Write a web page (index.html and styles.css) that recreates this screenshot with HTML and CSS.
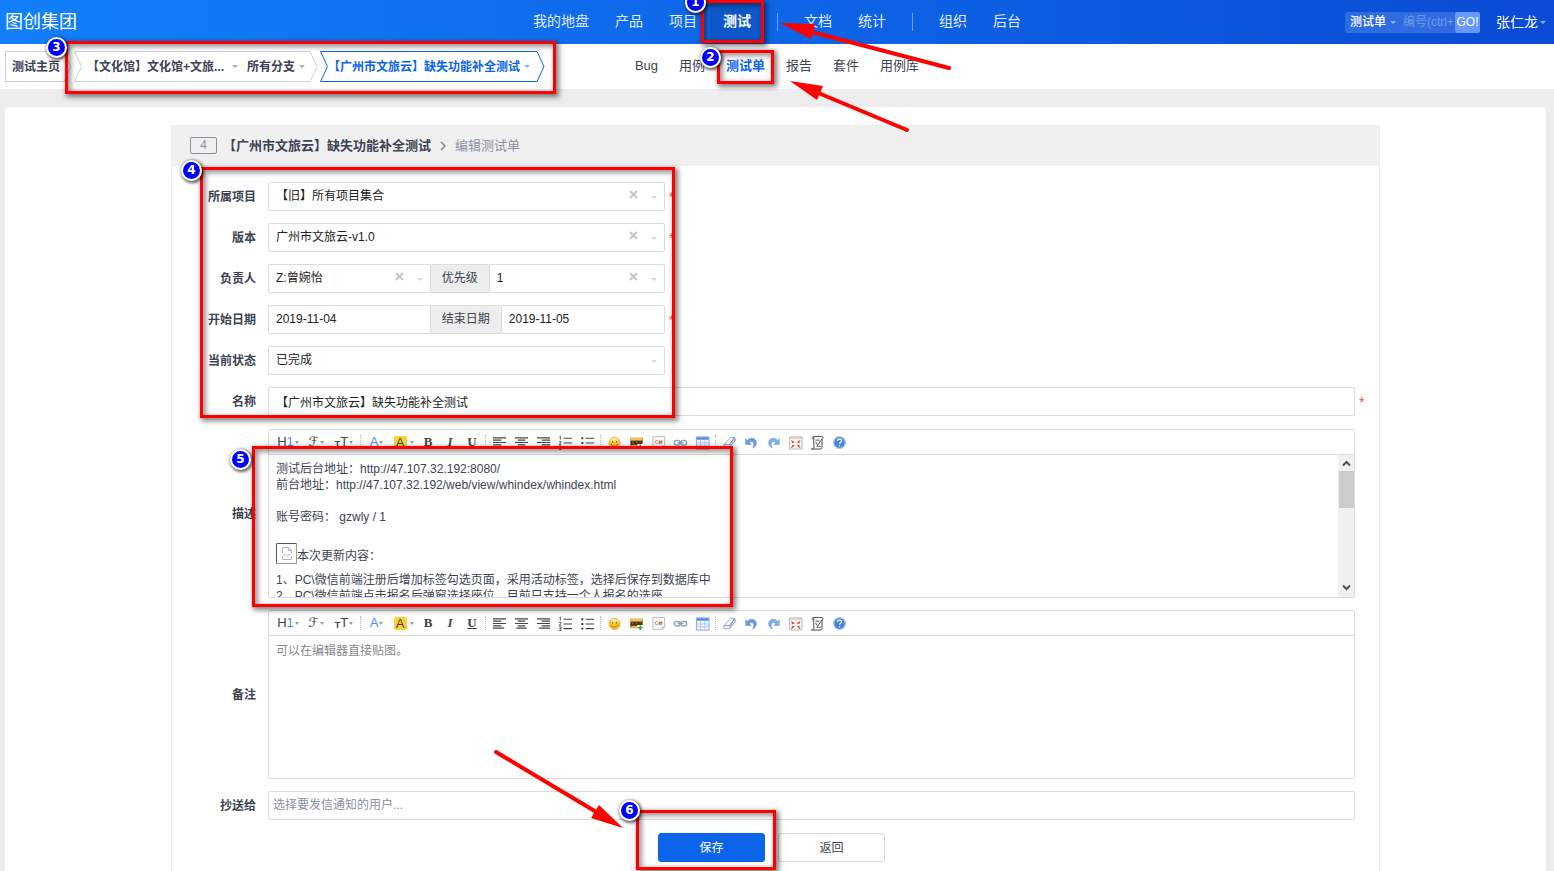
FILE: index.html
```html
<!DOCTYPE html>
<html lang="zh-CN">
<head>
<meta charset="utf-8">
<title>编辑测试单</title>
<link rel="stylesheet" href="styles.css">
</head>
<body>
<svg class="defs" aria-hidden="true">
  <defs>
    <symbol id="i-left" viewBox="0 0 16 16"><path d="M1 3h14M1 5.500h9M1 8h14M1 10.500h9M1 13h12" stroke="#444" stroke-width="1.300" fill="none"/></symbol>
    <symbol id="i-center" viewBox="0 0 16 16"><path d="M1 3h14M4 5.500h8M1 8h14M4 10.500h8M2.500 13h11" stroke="#444" stroke-width="1.300" fill="none"/></symbol>
    <symbol id="i-right" viewBox="0 0 16 16"><path d="M1 3h14M6 5.500h9M1 8h14M6 10.500h9M3 13h12" stroke="#444" stroke-width="1.300" fill="none"/></symbol>
    <symbol id="i-ol" viewBox="0 0 16 16"><path d="M6 3.500h9M6 8.500h9M6 13.500h9" stroke="#444" stroke-width="1.200"/><path d="M1.500 2l1-.8v3.600M1.200 6.800h2v1.400l-2 1.600h2.200M1.200 11.500h2v4h-2M1.500 13.400h1.500" stroke="#444" stroke-width=".9" fill="none"/></symbol>
    <symbol id="i-ul" viewBox="0 0 16 16"><path d="M6 3.500h9M6 8.500h9M6 13.500h9" stroke="#444" stroke-width="1.200"/><path d="M1.500 2.500h2v2h-2zM1.500 7.500h2v2h-2zM1.500 12.500h2v2h-2z" fill="#333"/></symbol>
    <symbol id="i-smile" viewBox="0 0 16 16"><circle cx="8" cy="8.500" r="6" fill="#fbc62d" stroke="#e9a51c" stroke-width=".7"/><ellipse cx="8" cy="5.500" rx="4" ry="2.200" fill="#fff3a8" opacity=".8"/><path d="M6 6v2M10 6v2" stroke="#8a5a00" stroke-width="1.200"/><path d="M4.300 9.500c1.500 3.300 5.900 3.300 7.400 0" stroke="#a86400" stroke-width="1" fill="none"/></symbol>
    <symbol id="i-image" viewBox="0 0 16 16"><path d="M1.500 3h13v9.500h-13z" fill="#3c2a12"/><path d="M1.500 3h13v3h-13z" fill="#f1c44e"/><path d="M2 11l3-1 3 .5 3-.5v3H2z" fill="#e2b04a"/><path d="M3 7h2v2H3zM7 7h2v1.500H7zM11 7h2v1h-2z" fill="#b8532d"/><path d="M9 9.500h6v6H9z" fill="#fff"/><path d="M12 10v5M9.500 12.500h5" stroke="#36a33a" stroke-width="1.700"/></symbol>
    <symbol id="i-code" viewBox="0 0 16 16"><path d="M2 1.500h12.500v10L12 14.500H2z" fill="#f8f8f8" stroke="#aaa" stroke-width=".8"/><path d="M14.500 11.500H12v3" fill="#ddd" stroke="#aaa" stroke-width=".6"/><path d="M7 6.200c-3-1.200-3.500 3.800 0 2.800M9.300 5.800l-.5 3.700M11.300 5.800l-.5 3.700M8 7h4.200M7.800 8.400h4.200" stroke="#b9704c" stroke-width="1" fill="none"/></symbol>
    <symbol id="i-link" viewBox="0 0 16 16"><rect x="1.500" y="5.800" width="6" height="4.800" rx="2.200" fill="none" stroke="#8ea5c8" stroke-width="1.500"/><rect x="8.500" y="5.800" width="6" height="4.800" rx="2.200" fill="none" stroke="#8ea5c8" stroke-width="1.500"/><path d="M5 8.200h6" stroke="#7d95bd" stroke-width="1.300"/></symbol>
    <symbol id="i-table" viewBox="0 0 16 16"><path d="M1.500 2h13.500v13H1.500z" fill="#f3f8ff" stroke="#7fa3de"/><path d="M2 2.500h12.500V5H2z" fill="#4f86dc"/><path d="M1.500 8.500H15M1.500 11.500H15M6 5v10M10.500 5v10" stroke="#a9c4ee" stroke-width=".9"/></symbol>
    <symbol id="i-eraser" viewBox="0 0 16 16"><path d="M9.500 2.500h4L8 10.500H2z" fill="#fff" stroke="#8fa3c4" stroke-width="1"/><path d="M2 10.500v3h6l6.500-8-1-3L8 10.500z" fill="#b9cdea" stroke="#7188b0" stroke-width=".8"/><path d="M2.500 11h5.200v2H2.500z" fill="#fff"/></symbol>
    <symbol id="i-undo" viewBox="0 0 16 16"><path d="M3.500 6C7 1.500 13.500 3.500 13.200 8.500c-.2 2.800-2.200 4.500-4 5.500 1.700-2.700 2-6.300-.8-7-1.200-.2-2 .4-2.600 1.300L7.500 10H1.800V4z" fill="#6c9ae2" stroke="#4f7fcc" stroke-width=".5"/></symbol>
    <symbol id="i-redo" viewBox="0 0 16 16"><path d="M12.500 6C9 1.500 2.500 3.500 2.800 8.500c.2 2.800 2.200 4.500 4 5.500C5.100 11.300 4.800 7.700 7.600 7c1.200-.2 2 .4 2.600 1.300L8.500 10h5.700V4z" fill="#7fb0e8" stroke="#5a8fd2" stroke-width=".5"/></symbol>
    <symbol id="i-full" viewBox="0 0 16 16"><path d="M1.500 2h13.500v13H1.500z" fill="#f7f5f3" stroke="#aaa" stroke-width=".8"/><path d="M2 3.300h12.500" stroke="#bbb"/><path d="M3.500 6l2.500 1.500-1.800.5M13 6l-2.500 1.500 1.800.5M3.500 13.500L6 11.500l-1.800-.7M13 13.500l-2.500-2 1.800-.7" stroke="#d0342c" stroke-width="1.100" fill="none"/></symbol>
    <symbol id="i-source" viewBox="0 0 16 16"><path d="M4 1.500h8.500c2 0 1.800 2.500.3 2.500v9.500c-.3 1-1 1.500-2 1.500H1.500C4 14.500 5 13.500 4 11z" fill="#f6f6f6" stroke="#444" stroke-width="1"/><path d="M4 1.500c-2.500.5-2 3-.2 3M12.800 4l-5 7.500M6 5.500h4M6 7.500l2 3M7 12h4.500" stroke="#555" stroke-width="1" fill="none"/></symbol>
    <symbol id="i-help" viewBox="0 0 16 16"><circle cx="8" cy="8" r="6.200" fill="#4a84d9" stroke="#9fbff0" stroke-width="1.400"/><path d="M5.800 6.300c.2-2.500 4.500-2.500 4.400 0 0 1.300-2.200 1.500-2.200 3M8 10.800v1.200" stroke="#fff" stroke-width="1.300" fill="none"/></symbol>
    <symbol id="i-x" viewBox="0 0 9 9"><path d="M1 1l7 7M8 1L1 8" stroke="#c8c8c8" stroke-width="2"/></symbol>
  </defs>
</svg>

<header class="topbar">
  <a class="brand" href="#">图创集团</a>
  <nav class="mainnav" aria-label="主导航">
    <a href="#">我的地盘</a><a href="#">产品</a><a href="#">项目</a><a href="#" class="active">测试</a>
    <span class="divider"></span>
    <a href="#">文档</a><a href="#">统计</a>
    <span class="divider"></span>
    <a href="#">组织</a><a href="#">后台</a>
  </nav>
  <div class="tools">
    <form class="search">
      <button type="button" class="scope">测试单<span class="caret"></span></button>
      <input type="text" aria-label="编号" placeholder="编号(ctrl+g)">
      <button type="button" class="go">GO!</button>
    </form>
    <button type="button" class="user">张仁龙<span class="caret"></span></button>
  </div>
</header>

<div class="subbar">
  <div class="crumbs">
    <div class="crumb first"><a href="#">测试主页</a><svg width="8" height="31"><path d="M0 .5L7 15.500L0 30.500"/></svg></div>
    <div class="crumb">
      <svg width="8" height="31"><path d="M8 .5H.5L7.500 15.500L.5 30.500H8"/></svg>
      <button type="button" class="product">【文化馆】文化馆+文旅...<span class="caret"></span></button>
      <button type="button" class="branch">所有分支<span class="caret"></span></button>
      <svg width="8" height="31"><path d="M0 .5L7 15.500L0 30.500"/></svg>
    </div>
    <div class="crumb current">
      <svg width="8" height="31"><path d="M8 .5H.5L7.500 15.500L.5 30.500H8"/></svg>
      <button type="button" class="task">【广州市文旅云】缺失功能补全测试<span class="caret"></span></button>
      <svg width="8" height="31"><path d="M0 .5L7 15.500L0 30.500"/></svg>
    </div>
  </div>
  <nav class="subnav" aria-label="测试">
    <a href="#">Bug</a><a href="#">用例</a><a href="#" class="active">测试单</a><a href="#">报告</a><a href="#">套件</a><a href="#">用例库</a>
  </nav>
  <div class="spacer"></div>
</div>

<main class="content">
  <section class="panel">
    <header class="panel-head">
      <span class="idbox">4</span>
      <h1>【广州市文旅云】缺失功能补全测试</h1>
      <svg class="arrow" width="6" height="10" viewBox="0 0 6 10"><path d="M1 1l4 4-4 4" fill="none" stroke="#7b8090" stroke-width="1.500"/></svg>
      <span class="action">编辑测试单</span>
    </header>
    <form class="form">
      <div class="row">
        <label for="project">所属项目</label>
        <div class="field">
          <div class="short"><div class="pick"><select id="project"><option>【旧】所有项目集合</option></select><button type="button" class="clear" aria-label="清除"><svg width="9" height="9"><use href="#i-x"/></svg></button><span class="caret"></span></div></div>
          <span class="req">*</span>
        </div>
      </div>
      <div class="row">
        <label for="build">版本</label>
        <div class="field">
          <div class="short"><div class="pick"><select id="build"><option>广州市文旅云-v1.0</option></select><button type="button" class="clear" aria-label="清除"><svg width="9" height="9"><use href="#i-x"/></svg></button><span class="caret"></span></div></div>
          <span class="req">*</span>
        </div>
      </div>
      <div class="row">
        <label for="owner">负责人</label>
        <div class="field">
          <div class="short">
            <div class="pick lead"><select id="owner"><option>Z:曾婉怡</option></select><button type="button" class="clear" aria-label="清除"><svg width="9" height="9"><use href="#i-x"/></svg></button><span class="caret"></span></div>
            <label class="addon" for="pri">优先级</label>
            <div class="pick"><select id="pri"><option>1</option></select><button type="button" class="clear" aria-label="清除"><svg width="9" height="9"><use href="#i-x"/></svg></button><span class="caret"></span></div>
          </div>
        </div>
      </div>
      <div class="row">
        <label for="begin">开始日期</label>
        <div class="field">
          <div class="short">
            <input class="text lead" id="begin" type="text" value="2019-11-04">
            <label class="addon" for="end">结束日期</label>
            <input class="text" id="end" type="text" value="2019-11-05">
          </div>
          <span class="req">*</span>
        </div>
      </div>
      <div class="row">
        <label for="status">当前状态</label>
        <div class="field"><div class="short"><div class="pick"><select id="status"><option>已完成</option></select><span class="caret"></span></div></div></div>
      </div>
      <div class="row named">
        <label for="name">名称</label>
        <div class="field"><input class="text" id="name" type="text" value="【广州市文旅云】缺失功能补全测试"><span class="req">*</span></div>
      </div>

      <div class="row">
        <span class="label" id="desc-label">描述</span>
        <div class="editor">
          <div class="toolbar">
            <button type="button" class="dd">H<i class="blue">1</i><span class="caret"></span></button><button type="button" class="dd"><i class="script">ℱ</i><span class="caret"></span></button><button type="button" class="dd"><small>T</small>T<span class="caret"></span></button>
            <span class="sep"></span>
            <button type="button" class="dd color fore">A<span class="caret"></span></button><button type="button" class="dd color"><i class="mark">A</i><span class="caret"></span></button><button type="button" class="bold">B</button><button type="button" class="italic">I</button><button type="button" class="under">U</button>
            <span class="sep"></span>
            <button type="button" aria-label="左对齐"><svg><use href="#i-left"/></svg></button><button type="button" aria-label="居中"><svg><use href="#i-center"/></svg></button><button type="button" aria-label="右对齐"><svg><use href="#i-right"/></svg></button><button type="button" aria-label="编号"><svg><use href="#i-ol"/></svg></button><button type="button" aria-label="项目符号"><svg><use href="#i-ul"/></svg></button>
            <span class="sep"></span>
            <button type="button" aria-label="表情"><svg><use href="#i-smile"/></svg></button><button type="button" aria-label="图片"><svg><use href="#i-image"/></svg></button><button type="button" aria-label="代码"><svg><use href="#i-code"/></svg></button><button type="button" aria-label="链接"><svg><use href="#i-link"/></svg></button><button type="button" aria-label="表格"><svg><use href="#i-table"/></svg></button>
            <span class="sep"></span>
            <button type="button" aria-label="清除格式"><svg><use href="#i-eraser"/></svg></button><button type="button" aria-label="撤销"><svg><use href="#i-undo"/></svg></button><button type="button" aria-label="重做"><svg><use href="#i-redo"/></svg></button><button type="button" aria-label="全屏"><svg><use href="#i-full"/></svg></button><button type="button" aria-label="源代码"><svg><use href="#i-source"/></svg></button><button type="button" aria-label="帮助"><svg><use href="#i-help"/></svg></button>
          </div>
          <div class="editbody">
            <div class="rich" contenteditable="true" role="textbox" aria-labelledby="desc-label">
              <p>测试后台地址：http://47.107.32.192:8080/<br>前台地址：http://47.107.32.192/web/view/whindex/whindex.html<br><br>账号密码： gzwly / 1</p>
              <p class="imgline"><svg width="21" height="21" viewBox="0 0 21 21"><path d="M.5 20.500V.5h20" fill="none" stroke="#555"/><path d="M20.500.5v20H.5" fill="none" stroke="#999"/><path d="M6.500 10V4.500h6l3 3V10M12.500 4.500v3h3M6.500 16.500v-3l3-2.500 2 2 2-1.500 2 2v3z" fill="none" stroke="#b5b5b5"/></svg>本次更新内容：</p>
              <p class="list">1、PC\微信前端注册后增加标签勾选页面，采用活动标签，选择后保存到数据库中<br>2、PC\微信前端点击报名后弹窗选择座位，目前只支持一个人报名的选座</p>
            </div>
            <div class="scroll" aria-hidden="true">
              <svg width="9" height="7" viewBox="0 0 9 7"><path d="M1 5.500l3.500-3.500L8 5.500" fill="none" stroke="#505050" stroke-width="2"/></svg>
              <span class="thumb"></span>
              <svg width="9" height="7" viewBox="0 0 9 7"><path d="M1 1.500L4.500 5 8 1.500" fill="none" stroke="#505050" stroke-width="2"/></svg>
            </div>
          </div>
        </div>
      </div>

      <div class="row">
        <label for="memo">备注</label>
        <div class="editor">
          <div class="toolbar">
            <button type="button" class="dd">H<i class="blue">1</i><span class="caret"></span></button><button type="button" class="dd"><i class="script">ℱ</i><span class="caret"></span></button><button type="button" class="dd"><small>T</small>T<span class="caret"></span></button>
            <span class="sep"></span>
            <button type="button" class="dd color fore">A<span class="caret"></span></button><button type="button" class="dd color"><i class="mark">A</i><span class="caret"></span></button><button type="button" class="bold">B</button><button type="button" class="italic">I</button><button type="button" class="under">U</button>
            <span class="sep"></span>
            <button type="button" aria-label="左对齐"><svg><use href="#i-left"/></svg></button><button type="button" aria-label="居中"><svg><use href="#i-center"/></svg></button><button type="button" aria-label="右对齐"><svg><use href="#i-right"/></svg></button><button type="button" aria-label="编号"><svg><use href="#i-ol"/></svg></button><button type="button" aria-label="项目符号"><svg><use href="#i-ul"/></svg></button>
            <span class="sep"></span>
            <button type="button" aria-label="表情"><svg><use href="#i-smile"/></svg></button><button type="button" aria-label="图片"><svg><use href="#i-image"/></svg></button><button type="button" aria-label="代码"><svg><use href="#i-code"/></svg></button><button type="button" aria-label="链接"><svg><use href="#i-link"/></svg></button><button type="button" aria-label="表格"><svg><use href="#i-table"/></svg></button>
            <span class="sep"></span>
            <button type="button" aria-label="清除格式"><svg><use href="#i-eraser"/></svg></button><button type="button" aria-label="撤销"><svg><use href="#i-undo"/></svg></button><button type="button" aria-label="重做"><svg><use href="#i-redo"/></svg></button><button type="button" aria-label="全屏"><svg><use href="#i-full"/></svg></button><button type="button" aria-label="源代码"><svg><use href="#i-source"/></svg></button><button type="button" aria-label="帮助"><svg><use href="#i-help"/></svg></button>
          </div>
          <textarea id="memo" class="editarea" placeholder="可以在编辑器直接贴图。"></textarea>
        </div>
      </div>

      <div class="row">
        <label for="mailto">抄送给</label>
        <div class="field nostar"><input class="text mail" id="mailto" type="text" placeholder="选择要发信通知的用户..."></div>
      </div>
      <div class="actions">
        <button type="button" class="btn primary">保存</button>
        <button type="button" class="btn">返回</button>
      </div>
    </form>
  </section>
</main>

<div class="notes">
  <div class="frame f1"></div>
  <div class="frame f2"></div>
  <div class="frame f3"></div>
  <div class="frame f4"></div>
  <div class="frame f5"></div>
  <div class="frame f6"></div>
  <svg class="arrows" width="1554" height="871" viewBox="0 0 1554 871">
    <g fill="#f00" stroke="#f00" stroke-linecap="round">
      <path d="M949 68L808 31" stroke-width="4"/><path d="M780 23L815 24L811 39z" stroke="none"/>
      <path d="M907 130L816 92" stroke-width="4"/><path d="M790 81L823 86L817 100z" stroke="none"/>
      <path d="M496 752L598 813" stroke-width="4"/><path d="M623 828L599 805L591 818z" stroke="none"/>
    </g>
  </svg>
  <span class="num n1">1</span>
  <span class="num n2">2</span>
  <span class="num n3">3</span>
  <span class="num n4">4</span>
  <span class="num n5">5</span>
  <span class="num n6">6</span>
</div>
</body>
</html>
```
FILE: styles.css
```css
* { box-sizing: border-box; }
body {
  margin: 0;
  min-height: 100vh;
  display: flex;
  flex-direction: column;
  position: relative;
  background: #ededed;
  color: #3c4353;
  font: 12px/16px "Liberation Sans", "Noto Sans CJK SC", sans-serif;
}
.defs { position: absolute; width: 0; height: 0; }
a { color: inherit; text-decoration: none; }
button, input, select, textarea { font: inherit; color: inherit; margin: 0; }
button { background: none; border: 0; padding: 0; white-space: nowrap; }
.caret {
  display: inline-block;
  flex: none;
  border: 3px solid transparent;
  border-top-color: #a3abbd;
  border-bottom: 0;
}

/* top bar */
.topbar {
  height: 44px;
  display: grid;
  grid-template-columns: 1fr auto 1fr;
  align-items: center;
  background: linear-gradient(90deg, #1280fa, #0a4bd4);
  color: #fff;
}
.brand { padding-left: 5px; font-size: 18px; line-height: 40px; }
.mainnav { display: flex; align-items: center; font-size: 14px; color: #e3edff; }
.mainnav a { padding: 0 13px; height: 44px; line-height: 42px; }
.mainnav .active { background: #0d57c8; color: #fff; font-weight: bold; }
.divider { width: 1px; height: 18px; margin: 0 13px; background: #6ba1f7; }
.tools { display: flex; justify-content: flex-end; gap: 16px; padding-right: 8px; }
.search {
  display: flex;
  align-items: center;
  width: 135px;
  height: 21px;
  background: #2f6ce0;
  border-radius: 2px;
}
.tools .caret { border-top-color: #8fb4f5; }
.scope { display: flex; align-items: center; gap: 4px; padding: 0 7px 0 5px; font-weight: 500; color: #fff; }
.search input { flex: 1; min-width: 0; background: none; border: 0; padding: 0; outline: 0; color: #fff; }
.search input::placeholder { color: #6c9bef; }
.go { width: 25px; height: 21px; margin-left: 2px; background: #6698ff; color: #fff; border-radius: 2px; }
.user { display: flex; align-items: center; gap: 2px; font-size: 14px; color: #fff; }

/* second bar */
.subbar {
  height: 45px;
  display: grid;
  grid-template-columns: 1fr auto 1fr;
  align-items: center;
  background: #fff;
}
.crumbs { display: flex; gap: 2px; padding-left: 5px; font-weight: bold; }
.crumb { display: flex; height: 31px; color: #3c4353; }
.crumb svg { flex: none; fill: none; stroke: #cbd0de; }
.crumb a, .crumb button {
  display: flex;
  align-items: center;
  border: solid #cbd0de;
  border-width: 1px 0;
  font-weight: bold;
}
.first a { border-left-width: 1px; padding: 0 4px 0 6px; }
.product { padding: 0 9px 0 5px; gap: 8px; }
.branch { padding-right: 5px; gap: 4px; }
.crumb.current { color: #0c64eb; }
.current svg { stroke: #0c64eb; }
.current button { border-color: #0c64eb; padding-right: 7px; gap: 4px; }
.current .caret { border-top-color: #86b1f5; }
.subnav { display: flex; gap: 21px; padding-bottom: 2px; font-size: 13px; }
.subnav .active { color: #0c64eb; font-weight: bold; }

/* content */
.content {
  flex: 1;
  margin: 18px 8px 0 5px;
  padding: 18px 24px 0;
  display: flex;
  background: #fff;
  border-radius: 4px 4px 0 0;
}
.panel { flex: 1; max-width: 1209px; margin: 0 auto; border: 1px solid #ededed; border-width: 0 1px; }
.panel-head { display: flex; align-items: center; height: 41px; padding-left: 18px; background: #f0f0f0; font-size: 13px; }
.idbox {
  width: 27px;
  height: 17px;
  border: 1px solid #8a90a3;
  border-radius: 2px;
  color: #8a90a3;
  font-size: 12px;
  line-height: 15px;
  text-align: center;
}
.panel-head h1 { margin: 0 9px 0 6px; font-size: 13px; font-weight: bold; }
.action { margin-left: 9px; color: #8a90a3; }

.form { display: flex; flex-direction: column; gap: 12px; padding: 16px 12px 8px 16px; }
.row { display: grid; grid-template-columns: 68px 1fr; gap: 12px; align-items: center; }
.row > label, .label { text-align: right; font-weight: bold; }
.named { padding-bottom: 1px; }
.field { display: flex; align-items: center; gap: 4px; }
.nostar { padding-right: 12px; }
.req { width: 8px; color: #f0503c; font-size: 14px; line-height: 16px; }
.short { display: flex; flex: 0 1 397px; }
.pick { position: relative; flex: 1; min-width: 0; }
select, .text {
  width: 100%;
  height: 29px;
  padding: 0 7px 1px;
  border: 1px solid #dcdcdc;
  border-radius: 2px;
  background: #fff;
  color: #222;
  appearance: none;
  outline: 0;
}
.text { flex: 1; min-width: 0; }
.lead { flex: 0 0 41%; }
.clear { position: absolute; right: 27px; top: 8px; height: 10px; display: flex; }
.pick .caret { position: absolute; right: 8px; top: 14px; border-top-color: #d3daea; }
.addon {
  flex: none;
  padding: 0 11px;
  border: solid #dcdcdc;
  border-width: 1px 0;
  background: #ededed;
  line-height: 27px;
}

/* rich editor */
.editor { display: flex; flex-direction: column; height: 169px; margin-right: 12px; border: 1px solid #dcdcdc; border-radius: 2px; }
.toolbar { display: flex; align-items: center; height: 25px; flex: none; padding-left: 5px; border-bottom: 1px solid #dcdcdc; overflow: hidden; }
.toolbar button { flex: none; width: 22px; height: 22px; display: flex; align-items: center; justify-content: center; color: #444; }
.toolbar .dd { width: 28px; font-size: 13px; }
.toolbar .color { width: 27px; }
.toolbar svg { width: 15px; height: 15px; }
.toolbar i { font-style: normal; }
.toolbar small { font-size: 9px; padding-top: 3px; font-weight: bold; }
.toolbar .caret { margin-left: 1px; border-width: 3px 2px 0; border-top-color: #999; }
.toolbar .blue, .toolbar .fore { color: #4a8df0; }
.toolbar .script { font-family: "DejaVu Sans", sans-serif; font-size: 13px; }
.toolbar .mark { width: 13px; line-height: 13px; background: #fdd13a; border-radius: 2px; color: #444; text-align: center; margin-right: 2px; }
.toolbar .bold, .toolbar .italic, .toolbar .under { font: bold 13px/16px "Liberation Serif", serif; }
.toolbar .italic { font-style: italic; }
.toolbar .under { text-decoration: underline; }
.sep { flex: none; height: 14px; margin: 0 2px; border-left: 1px dotted #bbb; }
.editbody { flex: 1; min-height: 0; display: flex; }
.rich { flex: 1; min-width: 0; padding: 6px 7px 0; overflow: hidden; outline: 0; color: #3c4353; }
.rich p { margin: 0; }
.rich .imgline { display: flex; align-items: flex-end; margin: 18px 0 8px; }
.scroll { width: 16px; display: flex; flex-direction: column; align-items: center; padding: 5px 0 6px; background: #f0f0f0; }
.thumb { width: 15px; height: 37px; margin: 4px 0 auto; background: #cbcbcb; }
.editarea { flex: 1; resize: none; border: 0; outline: 0; padding: 7px; background: #fff; }
.editarea::placeholder { color: #888; }
.mail { padding-left: 4px; }
.mail::placeholder { color: #8a90a3; }

.actions { display: flex; justify-content: center; gap: 13px; padding-top: 1px; padding-right: 12px; }
.btn { width: 107px; height: 29px; border: 1px solid #d5d8e2; border-radius: 3px; background: #fff; }
.primary { background: #0c64eb; border-color: #0c64eb; color: #fff; }

/* annotations laid over the page */
.notes { position: absolute; inset: 0; overflow: hidden; pointer-events: none; }
.frame {
  position: absolute;
  border: 3px solid #f00;
  box-shadow: 2px 2px 5px 1px rgba(0, 0, 0, .5), inset 2px 2px 5px 1px rgba(0, 0, 0, .4);
}
.f1 { left: 701px; top: 0; width: 63px; height: 43px; }
.f2 { left: 717px; top: 50px; width: 57px; height: 34px; }
.f3 { left: 65px; top: 41px; width: 491px; height: 53px; }
.f4 { left: 200px; top: 167px; width: 475px; height: 251px; }
.f5 { left: 252px; top: 446px; width: 481px; height: 161px; }
.f6 { left: 636px; top: 810px; width: 140px; height: 60px; }
.arrows { position: absolute; left: 0; top: 0; }
.num {
  position: absolute;
  width: 21px;
  height: 21px;
  border: 2px solid #fff;
  border-radius: 50%;
  background: #00f;
  box-shadow: 1px 1px 3px 1px rgba(0, 0, 0, .6);
  color: #fff;
  font: bold 12px/17px "DejaVu Sans", sans-serif;
  text-align: center;
}
.n1 { left: 685px; top: -8px; }
.n2 { left: 700px; top: 47px; }
.n3 { left: 46px; top: 37px; }
.n4 { left: 181px; top: 160px; }
.n5 { left: 230px; top: 449px; }
.n6 { left: 619px; top: 800px; }
```
